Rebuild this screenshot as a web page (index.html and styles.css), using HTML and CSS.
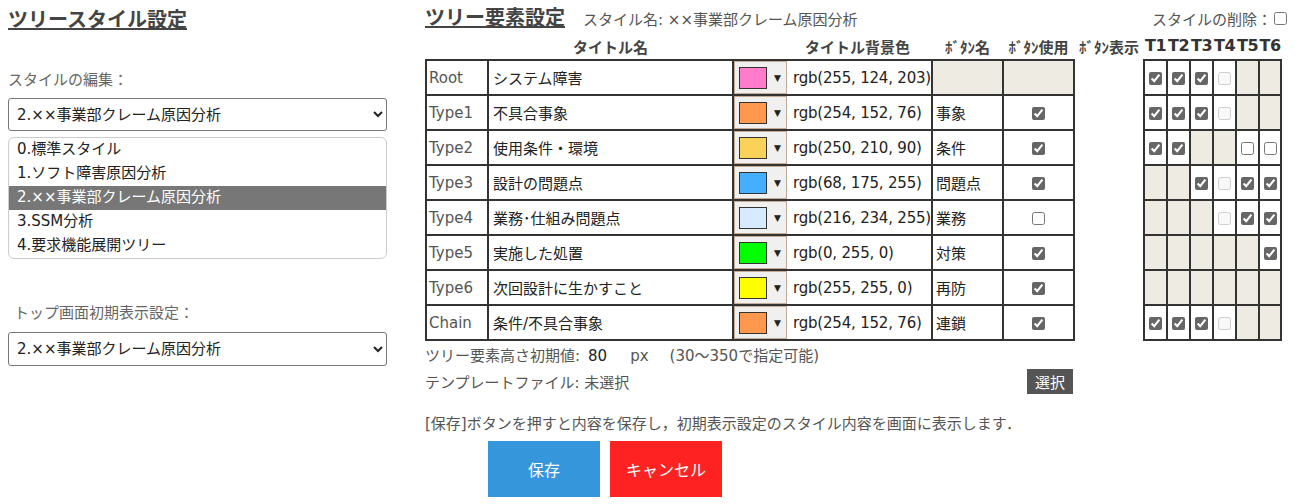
FILE: index.html
```html
<!DOCTYPE html>
<html lang="ja">
<head>
  <meta charset="UTF-8" />
  <meta name="viewport" content="width=device-width, initial-scale=1.0" />
  <title>ツリースタイル設定</title>
  <link rel="stylesheet" href="styles.css">
</head>
<body>
  <div class="page">
    <section class="side">
      <h1 class="title">ツリースタイル設定</h1>

      <div class="label">スタイルの編集：</div>
      <select class="style-select">
        <option>2.××事業部クレーム原因分析</option>
      </select>
      <ul class="style-list">
        <li>0.標準スタイル</li>
        <li>1.ソフト障害原因分析</li>
        <li class="selected">2.××事業部クレーム原因分析</li>
        <li>3.SSM分析</li>
        <li>4.要求機能展開ツリー</li>
      </ul>

      <div class="label label-top">トップ画面初期表示設定：</div>
      <select class="style-select top-select">
        <option>2.××事業部クレーム原因分析</option>
      </select>
    </section>

    <section class="main">
      <div class="main-head">
        <h1 class="title">ツリー要素設定</h1>
        <span class="style-name">スタイル名: ××事業部クレーム原因分析</span>
        <label class="delete">スタイルの削除：<input type="checkbox"></label>
      </div>

      <table class="elements">
        <colgroup>
          <col class="c-kind"><col class="c-name"><col class="c-color"><col class="c-btn"><col class="c-btn">
          <col class="c-gap"><col class="c-t"><col class="c-t"><col class="c-t"><col class="c-t"><col class="c-t"><col class="c-t6">
        </colgroup>
        <thead>
          <tr>
            <th></th>
            <th>タイトル名</th>
            <th class="h-color">タイトル背景色</th>
            <th>ﾎﾞﾀﾝ名</th>
            <th>ﾎﾞﾀﾝ使用</th>
            <th>ﾎﾞﾀﾝ表示</th>
            <th class="h-t">T1</th><th class="h-t">T2</th><th class="h-t">T3</th><th class="h-t">T4</th><th class="h-t">T5</th><th class="h-t">T6</th>
          </tr>
        </thead>
        <tbody>
          <tr>
            <td class="kind">Root</td>
            <td class="name">システム障害</td>
            <td class="color"><div class="color-cell"><span class="picker"><span class="swatch" style="background:#ff7ccb"></span><span class="arrow">▼</span></span><span class="rgb">rgb(255, 124, 203)</span></div></td>
            <td class="off"></td>
            <td class="off"></td>
            <td class="gap"></td>
            <td class="t"><input type="checkbox" checked></td>
            <td class="t"><input type="checkbox" checked></td>
            <td class="t"><input type="checkbox" checked></td>
            <td class="t"><input type="checkbox" disabled></td>
            <td class="t off"></td>
            <td class="t off"></td>
          </tr>
          <tr>
            <td class="kind">Type1</td>
            <td class="name">不具合事象</td>
            <td class="color"><div class="color-cell"><span class="picker"><span class="swatch" style="background:#fe984c"></span><span class="arrow">▼</span></span><span class="rgb">rgb(254, 152, 76)</span></div></td>
            <td class="bname">事象</td>
            <td class="use"><input type="checkbox" checked></td>
            <td class="gap"></td>
            <td class="t"><input type="checkbox" checked></td>
            <td class="t"><input type="checkbox" checked></td>
            <td class="t"><input type="checkbox" checked></td>
            <td class="t"><input type="checkbox" disabled></td>
            <td class="t off"></td>
            <td class="t off"></td>
          </tr>
          <tr>
            <td class="kind">Type2</td>
            <td class="name">使用条件・環境</td>
            <td class="color"><div class="color-cell"><span class="picker"><span class="swatch" style="background:#fad25a"></span><span class="arrow">▼</span></span><span class="rgb">rgb(250, 210, 90)</span></div></td>
            <td class="bname">条件</td>
            <td class="use"><input type="checkbox" checked></td>
            <td class="gap"></td>
            <td class="t"><input type="checkbox" checked></td>
            <td class="t"><input type="checkbox" checked></td>
            <td class="t off"></td>
            <td class="t off"></td>
            <td class="t"><input type="checkbox"></td>
            <td class="t"><input type="checkbox"></td>
          </tr>
          <tr>
            <td class="kind">Type3</td>
            <td class="name">設計の問題点</td>
            <td class="color"><div class="color-cell"><span class="picker"><span class="swatch" style="background:#44afff"></span><span class="arrow">▼</span></span><span class="rgb">rgb(68, 175, 255)</span></div></td>
            <td class="bname">問題点</td>
            <td class="use"><input type="checkbox" checked></td>
            <td class="gap"></td>
            <td class="t off"></td>
            <td class="t off"></td>
            <td class="t"><input type="checkbox" checked></td>
            <td class="t"><input type="checkbox" disabled></td>
            <td class="t"><input type="checkbox" checked></td>
            <td class="t"><input type="checkbox" checked></td>
          </tr>
          <tr>
            <td class="kind">Type4</td>
            <td class="name">業務･仕組み問題点</td>
            <td class="color"><div class="color-cell"><span class="picker"><span class="swatch" style="background:#d8eaff"></span><span class="arrow">▼</span></span><span class="rgb">rgb(216, 234, 255)</span></div></td>
            <td class="bname">業務</td>
            <td class="use"><input type="checkbox"></td>
            <td class="gap"></td>
            <td class="t off"></td>
            <td class="t off"></td>
            <td class="t off"></td>
            <td class="t"><input type="checkbox" disabled></td>
            <td class="t"><input type="checkbox" checked></td>
            <td class="t"><input type="checkbox" checked></td>
          </tr>
          <tr>
            <td class="kind">Type5</td>
            <td class="name">実施した処置</td>
            <td class="color"><div class="color-cell"><span class="picker"><span class="swatch" style="background:#00ff00"></span><span class="arrow">▼</span></span><span class="rgb">rgb(0, 255, 0)</span></div></td>
            <td class="bname">対策</td>
            <td class="use"><input type="checkbox" checked></td>
            <td class="gap"></td>
            <td class="t off"></td>
            <td class="t off"></td>
            <td class="t off"></td>
            <td class="t off"></td>
            <td class="t off"></td>
            <td class="t"><input type="checkbox" checked></td>
          </tr>
          <tr>
            <td class="kind">Type6</td>
            <td class="name">次回設計に生かすこと</td>
            <td class="color"><div class="color-cell"><span class="picker"><span class="swatch" style="background:#ffff00"></span><span class="arrow">▼</span></span><span class="rgb">rgb(255, 255, 0)</span></div></td>
            <td class="bname">再防</td>
            <td class="use"><input type="checkbox" checked></td>
            <td class="gap"></td>
            <td class="t off"></td>
            <td class="t off"></td>
            <td class="t off"></td>
            <td class="t off"></td>
            <td class="t off"></td>
            <td class="t off"></td>
          </tr>
          <tr>
            <td class="kind">Chain</td>
            <td class="name">条件/不具合事象</td>
            <td class="color"><div class="color-cell"><span class="picker"><span class="swatch" style="background:#fe984c"></span><span class="arrow">▼</span></span><span class="rgb">rgb(254, 152, 76)</span></div></td>
            <td class="bname">連鎖</td>
            <td class="use"><input type="checkbox" checked></td>
            <td class="gap"></td>
            <td class="t"><input type="checkbox" checked></td>
            <td class="t"><input type="checkbox" checked></td>
            <td class="t"><input type="checkbox" checked></td>
            <td class="t"><input type="checkbox" disabled></td>
            <td class="t off"></td>
            <td class="t off"></td>
          </tr>
        </tbody>
      </table>

      <div class="height-row">
        ツリー要素高さ初期値:<span class="value">80</span><span class="unit">px</span><span class="range">(30～350で指定可能)</span>
      </div>
      <div class="template-row">
        <span>テンプレートファイル: 未選択</span>
        <button class="pick">選択</button>
      </div>
      <p class="note">[保存]ボタンを押すと内容を保存し，初期表示設定のスタイル内容を画面に表示します．</p>
      <div class="actions">
        <button class="save">保存</button>
        <button class="cancel">キャンセル</button>
      </div>
    </section>
  </div>
</body>
</html>
```

FILE: styles.css
```css
body {
  margin: 0;
  font-family: "DejaVu Sans", "Noto Sans CJK JP", sans-serif;
  font-size: 15px;
  color: #555;
}
.page {
  display: flex;
  gap: 38px;
  padding: 0 9px 0 8px;
}
.title {
  margin: 0;
  font-size: 20px;
  line-height: 24px;
  font-weight: bold;
  color: #444;
  text-decoration: underline;
}

/* left column */
.side {
  width: 379px;
  flex: none;
  padding-top: 8px;
}
.label {
  margin-top: 38px;
  line-height: 20px;
  color: #666;
}
.label-top {
  margin-top: 44px;
  padding-left: 6px;
}
.style-select {
  display: block;
  width: 379px;
  height: 33px;
  margin-top: 8px;
  padding: 0 4px;
  font-family: inherit;
  font-size: 15px;
  color: #222;
  background: #fff;
  border: 1px solid #767676;
  border-radius: 3px;
}
.top-select {
  margin-top: 9px;
  height: 34px;
}
.style-list {
  list-style: none;
  margin: 6px 0 0;
  padding: 0;
  border: 1px solid #ccc;
  border-radius: 6px;
  overflow: hidden;
}
.style-list li {
  height: 24px;
  line-height: 22px;
  padding-left: 8px;
  color: #222;
}
.style-list li.selected {
  background: #777;
  color: #fff;
}

/* right column */
.main {
  flex: 1;
}
.main-head {
  display: flex;
  align-items: baseline;
  height: 30px;
  padding-top: 6px;
}
.style-name {
  margin-left: 18px;
}
.delete {
  margin-left: auto;
  display: flex;
  align-items: center;
}
.delete input {
  margin: 0 0 0 2px;
  width: 13px;
  height: 13px;
}
.elements {
  border-collapse: collapse;
  table-layout: fixed;
  width: 855px;
}
.c-kind { width: 62px; }
.c-name { width: 245px; }
.c-color { width: 199px; }
.c-btn { width: 71px; }
.c-gap { width: 70px; }
.c-t { width: 23px; }
.c-t6 { width: 22px; }
.elements th {
  height: 23px;
  padding: 0;
  font-weight: bold;
  color: #444;
  white-space: nowrap;
  vertical-align: top;
}
.elements th.h-color {
  padding-left: 50px;
}
.elements th.h-t {
  font-size: 16px;
  color: #333;
  letter-spacing: -0.5px;
}
.elements td {
  height: 33px;
  padding: 0 3px;
  border: 2px solid #333;
  background: #fff;
  color: #222;
  white-space: nowrap;
}
.elements td.kind {
  padding-left: 2px;
  color: #555;
}
.elements td.name {
  padding-left: 4px;
}
.elements td.color {
  padding: 0;
}
.elements td.gap {
  border: none;
  background: transparent;
}
.elements td.use,
.elements td.t {
  padding: 0;
  text-align: center;
}
.elements td.off {
  background: #eeebe3;
}
.elements input[type="checkbox"] {
  margin: 0;
  width: 13px;
  height: 13px;
  vertical-align: middle;
  accent-color: #666;
}
.color-cell {
  display: flex;
  align-items: center;
  height: 33px;
}
.picker {
  display: flex;
  align-items: center;
  width: 51px;
  height: 31px;
  margin-right: 6px;
  background: #f0f0f0;
  border: 1px solid #c3ab95;
}
.swatch {
  width: 26px;
  height: 20px;
  margin-left: 4px;
  border: 1px solid #333;
}
.arrow {
  margin-left: 7px;
  font-size: 9px;
  color: #222;
}
.rgb {
  letter-spacing: -0.2px;
}

/* below table */
.height-row {
  margin-top: 5px;
  line-height: 20px;
}
.value {
  margin-left: 8px;
  color: #222;
}
.unit {
  margin-left: 23px;
}
.range {
  margin-left: 21px;
}
.template-row {
  display: flex;
  justify-content: space-between;
  align-items: center;
  width: 648px;
  height: 25px;
  margin-top: 3px;
}
.pick {
  height: 25px;
  padding: 0 8px;
  font-family: inherit;
  font-size: 15px;
  color: #fff;
  background: #555;
  border: none;
}
.note {
  margin: 20px 0 0;
  line-height: 20px;
}
.actions {
  display: flex;
  gap: 10px;
  margin: 7px 0 0 63px;
}
.actions button {
  width: 112px;
  height: 56px;
  font-family: inherit;
  font-size: 16px;
  color: #fff;
  border: none;
}
.save {
  background: #3596dc;
}
.cancel {
  background: #ff2222;
}
```
